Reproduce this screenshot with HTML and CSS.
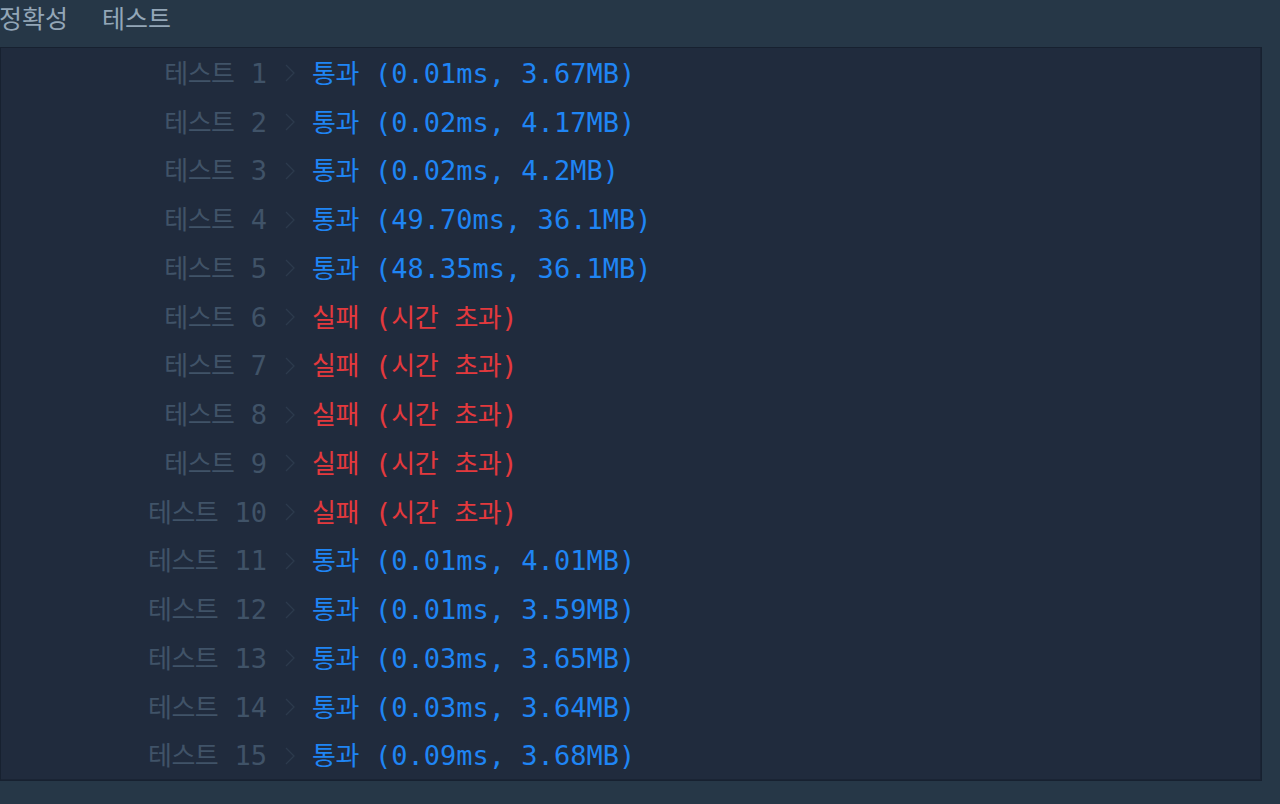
FILE: index.html
```html
<!DOCTYPE html>
<html lang="ko">
<head>
<meta charset="utf-8">
<title>정확성 테스트</title>
<link rel="stylesheet" href="styles.css">
</head>
<body>
<div class="page">
  <div class="header">
    <span class="h-item">정확성</span>
    <span class="h-item">테스트</span>
  </div>
  <div class="panel">
    <div class="row"><span class="label"><span class="ko">테스트</span> 1</span><span class="chev"><svg viewBox="0 0 10 18" width="10" height="18"><polyline points="1,1 9,9 1,17"/></svg></span><span class="res pass"><span class="ko">통과</span> (0.01ms, 3.67MB)</span></div>
    <div class="row"><span class="label"><span class="ko">테스트</span> 2</span><span class="chev"><svg viewBox="0 0 10 18" width="10" height="18"><polyline points="1,1 9,9 1,17"/></svg></span><span class="res pass"><span class="ko">통과</span> (0.02ms, 4.17MB)</span></div>
    <div class="row"><span class="label"><span class="ko">테스트</span> 3</span><span class="chev"><svg viewBox="0 0 10 18" width="10" height="18"><polyline points="1,1 9,9 1,17"/></svg></span><span class="res pass"><span class="ko">통과</span> (0.02ms, 4.2MB)</span></div>
    <div class="row"><span class="label"><span class="ko">테스트</span> 4</span><span class="chev"><svg viewBox="0 0 10 18" width="10" height="18"><polyline points="1,1 9,9 1,17"/></svg></span><span class="res pass"><span class="ko">통과</span> (49.70ms, 36.1MB)</span></div>
    <div class="row"><span class="label"><span class="ko">테스트</span> 5</span><span class="chev"><svg viewBox="0 0 10 18" width="10" height="18"><polyline points="1,1 9,9 1,17"/></svg></span><span class="res pass"><span class="ko">통과</span> (48.35ms, 36.1MB)</span></div>
    <div class="row"><span class="label"><span class="ko">테스트</span> 6</span><span class="chev"><svg viewBox="0 0 10 18" width="10" height="18"><polyline points="1,1 9,9 1,17"/></svg></span><span class="res fail"><span class="ko">실패</span> (<span class="ko">시간</span> <span class="ko">초과</span>)</span></div>
    <div class="row"><span class="label"><span class="ko">테스트</span> 7</span><span class="chev"><svg viewBox="0 0 10 18" width="10" height="18"><polyline points="1,1 9,9 1,17"/></svg></span><span class="res fail"><span class="ko">실패</span> (<span class="ko">시간</span> <span class="ko">초과</span>)</span></div>
    <div class="row"><span class="label"><span class="ko">테스트</span> 8</span><span class="chev"><svg viewBox="0 0 10 18" width="10" height="18"><polyline points="1,1 9,9 1,17"/></svg></span><span class="res fail"><span class="ko">실패</span> (<span class="ko">시간</span> <span class="ko">초과</span>)</span></div>
    <div class="row"><span class="label"><span class="ko">테스트</span> 9</span><span class="chev"><svg viewBox="0 0 10 18" width="10" height="18"><polyline points="1,1 9,9 1,17"/></svg></span><span class="res fail"><span class="ko">실패</span> (<span class="ko">시간</span> <span class="ko">초과</span>)</span></div>
    <div class="row"><span class="label"><span class="ko">테스트</span> 10</span><span class="chev"><svg viewBox="0 0 10 18" width="10" height="18"><polyline points="1,1 9,9 1,17"/></svg></span><span class="res fail"><span class="ko">실패</span> (<span class="ko">시간</span> <span class="ko">초과</span>)</span></div>
    <div class="row"><span class="label"><span class="ko">테스트</span> 11</span><span class="chev"><svg viewBox="0 0 10 18" width="10" height="18"><polyline points="1,1 9,9 1,17"/></svg></span><span class="res pass"><span class="ko">통과</span> (0.01ms, 4.01MB)</span></div>
    <div class="row"><span class="label"><span class="ko">테스트</span> 12</span><span class="chev"><svg viewBox="0 0 10 18" width="10" height="18"><polyline points="1,1 9,9 1,17"/></svg></span><span class="res pass"><span class="ko">통과</span> (0.01ms, 3.59MB)</span></div>
    <div class="row"><span class="label"><span class="ko">테스트</span> 13</span><span class="chev"><svg viewBox="0 0 10 18" width="10" height="18"><polyline points="1,1 9,9 1,17"/></svg></span><span class="res pass"><span class="ko">통과</span> (0.03ms, 3.65MB)</span></div>
    <div class="row"><span class="label"><span class="ko">테스트</span> 14</span><span class="chev"><svg viewBox="0 0 10 18" width="10" height="18"><polyline points="1,1 9,9 1,17"/></svg></span><span class="res pass"><span class="ko">통과</span> (0.03ms, 3.64MB)</span></div>
    <div class="row"><span class="label"><span class="ko">테스트</span> 15</span><span class="chev"><svg viewBox="0 0 10 18" width="10" height="18"><polyline points="1,1 9,9 1,17"/></svg></span><span class="res pass"><span class="ko">통과</span> (0.09ms, 3.68MB)</span></div>
  </div>
</div>
</body>
</html>
```

FILE: styles.css
```css
html, body {
  margin: 0;
  padding: 0;
  background: #263747;
  height: 100%;
  overflow: hidden;
}

.page {
  width: 1280px;
  height: 804px;
  background: #263747;
}

.header {
  height: 47px;
  display: flex;
  align-items: center;
  gap: 34px;
  margin-left: -1px;
  font-family: "Noto Sans CJK KR", "Noto Sans", sans-serif;
  font-size: 25px;
  color: #93a6b7;
  box-sizing: border-box;
  padding-bottom: 13px;
}

.h-item {
  letter-spacing: 0;
}

.panel {
  width: 1262px;
  height: 734px;
  box-sizing: border-box;
  background: #202b3d;
  border: 1px solid #172130;
  box-shadow: inset -1px -1px 0 #1a2434;
  font-family: "DejaVu Sans Mono", "Noto Sans CJK KR", monospace;
  font-size: 27px;
}

.row {
  height: 48.75px;
  display: flex;
  align-items: center;
  white-space: pre;
  padding-bottom: 2px;
  box-sizing: border-box;
}

.ko {
  font-family: "Noto Sans CJK KR", sans-serif;
  font-size: 26px;
  letter-spacing: -0.52px;
}

.label {
  width: 266px;
  text-align: right;
  color: #405368;
}

.chev {
  width: 45px;
  display: flex;
  align-items: center;
  padding-left: 18px;
  box-sizing: border-box;
  padding-top: 4px;
}

.chev svg {
  display: block;
}

.chev polyline {
  fill: none;
  stroke: #2c3a4d;
  stroke-width: 1.3;
}

.res.pass {
  color: #1f85f4;
}

.res.fail {
  color: #e3393d;
}
```
